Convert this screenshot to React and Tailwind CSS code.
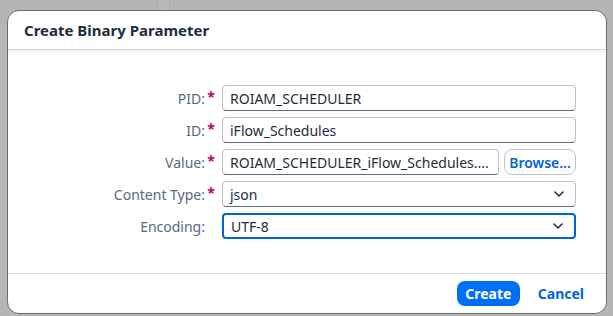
import React from "react";

function Chevron() {
  return (
    <svg width="12" height="12" viewBox="0 0 12 12" fill="none">
      <path d="M2 4l4 4 4-4" stroke="#1d2d3e" strokeWidth="1.6" strokeLinecap="round" strokeLinejoin="round" />
    </svg>
  );
}

function Label({ text, required }) {
  return (
    <div className="w-[214px] flex justify-end items-center text-[14px] text-[#556b82] pr-[6px]">
      <span>{text}</span>
      {required ? (
        <span className="text-[#ba066c] w-[10px] text-center font-bold ml-[1px] -mt-[4px]">*</span>
      ) : (
        <span className="w-[10px] ml-[1px]"></span>
      )}
    </div>
  );
}

function Input({ value, focused, select, className = "" }) {
  return (
    <div
      className={
        "h-[26px] rounded-[4px] bg-white flex items-center pl-[7px] pr-[10px] text-[14px] text-[#1d2d3e] " +
        (focused
          ? "border-2 border-[#0064d9] pl-[6px] "
          : "border border-[#bcc3ca] border-b-[#556b81] ") +
        className
      }
    >
      <span className="flex-1 whitespace-nowrap">{value}</span>
      {select && <Chevron />}
    </div>
  );
}

export default function App() {
  return (
    <div
      className="w-[613px] h-[316px] bg-[#b3b5b7] overflow-hidden pt-[10px] pl-[7px] relative"
      style={{ fontFamily: '"Noto Sans", "Liberation Sans", sans-serif' }}
    >
      <div className="absolute left-[157px] top-0 w-[13px] h-[10px] bg-[#b8babc] border-l border-r border-[#a9abad]"></div>
      <div className="relative w-[600px] h-[304px] rounded-[12px] bg-white border border-[#6a6d70] flex flex-col overflow-hidden">
        <div className="h-[39px] flex items-center pl-[16px] border-b border-[#d9d9d9] shadow-[0_2px_3px_rgba(0,0,0,0.06)]">
          <span className="text-[15px] font-bold text-[#1d2d3e]">Create Binary Parameter</span>
        </div>
        <div className="flex-1 pt-[35px] flex flex-col gap-[6px]">
          <div className="flex items-center">
            <Label text="PID:" required />
            <Input value="ROIAM_SCHEDULER" className="w-[354px]" />
          </div>
          <div className="flex items-center">
            <Label text="ID:" required />
            <Input value="iFlow_Schedules" className="w-[354px]" />
          </div>
          <div className="flex items-center">
            <Label text="Value:" required />
            <Input value="ROIAM_SCHEDULER_iFlow_Schedules...." className="w-[277px]" />
            <button className="ml-[5px] w-[72px] h-[26px] rounded-[8px] border border-[#bcc3ca] bg-white text-[14px] font-semibold text-[#0064d9]">
              Browse...
            </button>
          </div>
          <div className="flex items-center">
            <Label text="Content Type:" required />
            <Input value="json" select className="w-[354px]" />
          </div>
          <div className="flex items-center">
            <Label text="Encoding:" />
            <Input value="UTF-8" select focused className="w-[354px]" />
          </div>
        </div>
        <div className="h-[40px] border-t border-[#d9d9d9] flex items-center justify-end pr-[12px] gap-[8px]">
          <button className="h-[25px] w-[63px] rounded-[8px] bg-[#0070f2] text-white text-[14px] font-bold">
            Create
          </button>
          <button className="h-[25px] px-[10px] rounded-[8px] text-[#0064d9] text-[14px] font-bold">
            Cancel
          </button>
        </div>
      </div>
    </div>
  );
}
